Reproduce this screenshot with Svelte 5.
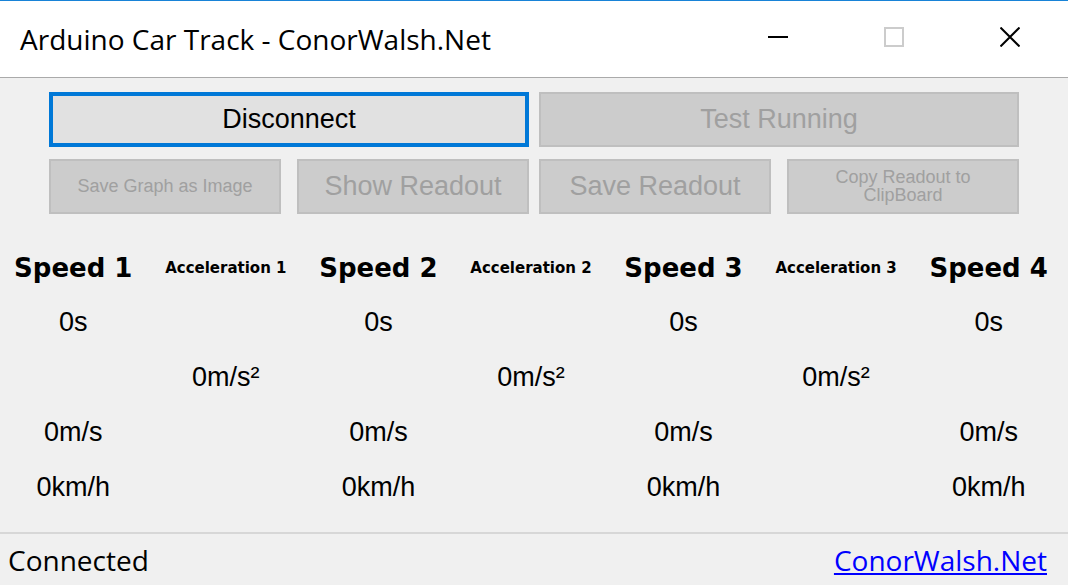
<script>
  const columns = [
    { label: 'Speed 1', kind: 'speed' },
    { label: 'Acceleration 1', kind: 'accel' },
    { label: 'Speed 2', kind: 'speed' },
    { label: 'Acceleration 2', kind: 'accel' },
    { label: 'Speed 3', kind: 'speed' },
    { label: 'Acceleration 3', kind: 'accel' },
    { label: 'Speed 4', kind: 'speed' }
  ];
  const rows = [
    { kind: 'speed', value: '0s' },
    { kind: 'accel', value: '0m/s²' },
    { kind: 'speed', value: '0m/s' },
    { kind: 'speed', value: '0km/h' }
  ];
</script>

<div class="window">
  <header>
    <h1>Arduino Car Track - ConorWalsh.Net</h1>
    <div class="controls">
      <button aria-label="Minimize"><svg width="20" height="20" viewBox="0 0 20 20"><path d="M0 10H20" /></svg></button>
      <button aria-label="Maximize" disabled><svg width="20" height="20" viewBox="0 0 20 20"><path d="M1 1H19V19H1Z" /></svg></button>
      <button aria-label="Close"><svg width="20" height="20" viewBox="0 0 20 20"><path d="M0.5 0.5L19.5 19.5M19.5 0.5L0.5 19.5" /></svg></button>
    </div>
  </header>

  <main>
    <div class="actions">
      <div class="group">
        <button class="wide primary">Disconnect</button>
        <button class="small" disabled>Save Graph as Image</button>
        <button disabled>Show Readout</button>
      </div>
      <div class="group">
        <button class="wide" disabled>Test Running</button>
        <button disabled>Save Readout</button>
        <button class="small" disabled>Copy Readout to<br />ClipBoard</button>
      </div>
    </div>

    <table>
      <thead>
        <tr>
          {#each columns as column}
            <th class={column.kind} scope="col">{column.label}</th>
          {/each}
        </tr>
      </thead>
      <tbody>
        {#each rows as row}
          <tr>
            {#each columns as column}
              <td>{column.kind === row.kind ? row.value : ''}</td>
            {/each}
          </tr>
        {/each}
      </tbody>
    </table>
  </main>

  <footer>
    <span>Connected</span>
    <a href="#site">ConorWalsh.Net</a>
  </footer>
</div>

<style>
  .window {
    box-sizing: border-box;
    display: flex;
    flex-direction: column;
    min-height: 100vh;
    border-top: 1px solid #1883d7;
    background: #f0f0f0;
    color: #000;
    font-family: "Open Sans", "Noto Sans", sans-serif;
  }
  header {
    display: flex;
    align-items: center;
    justify-content: space-between;
    height: 76px;
    padding-left: 20px;
    border-bottom: 1px solid #aaa;
    background: #fff;
  }
  h1 {
    margin: 0;
    font-size: 28px;
    font-weight: 400;
  }
  .controls {
    display: flex;
    align-self: flex-start;
  }
  .controls button {
    display: flex;
    align-items: center;
    justify-content: center;
    width: 116px;
    height: 72px;
    padding: 0;
    border: 0;
    background: none;
    color: #000;
  }
  .controls button:disabled { color: #ccc; }
  svg {
    fill: none;
    stroke: currentColor;
    stroke-width: 2;
  }
  main { flex: 1; }
  .actions {
    display: grid;
    grid-template-columns: 1fr 1fr;
    gap: 10px;
    padding: 14px 49px 0;
  }
  .group {
    display: grid;
    grid-template-columns: 1fr 1fr;
    gap: 12px 16px;
  }
  .group button {
    height: 55px;
    padding: 0;
    border: 2px solid #bfbfbf;
    background: #ccc;
    color: #a0a0a0;
    font-family: "Liberation Sans", Arial, sans-serif;
    font-size: 27px;
  }
  .group .wide { grid-column: span 2; }
  .group .primary {
    border: 4px solid #0078d7;
    background: #e1e1e1;
    color: #000;
  }
  .group .small {
    padding-bottom: 2px;
    font-size: 18px;
    line-height: 18px;
  }
  table {
    width: 100%;
    margin: 26px 0 0 -3px;
    border-collapse: collapse;
    table-layout: fixed;
  }
  th, td {
    height: 55px;
    padding: 0;
    text-align: center;
    white-space: nowrap;
  }
  th {
    font-family: "DejaVu Sans", Verdana, sans-serif;
    font-size: 26px;
  }
  th.accel { font-size: 15px; }
  td {
    font-family: "Liberation Sans", Arial, sans-serif;
    font-size: 27px;
  }
  footer {
    display: flex;
    align-items: center;
    justify-content: space-between;
    height: 51px;
    padding: 0 21px 0 8px;
    border-top: 2px solid #d7d7d7;
    font-size: 28px;
  }
  a { color: #00f; }
</style>
